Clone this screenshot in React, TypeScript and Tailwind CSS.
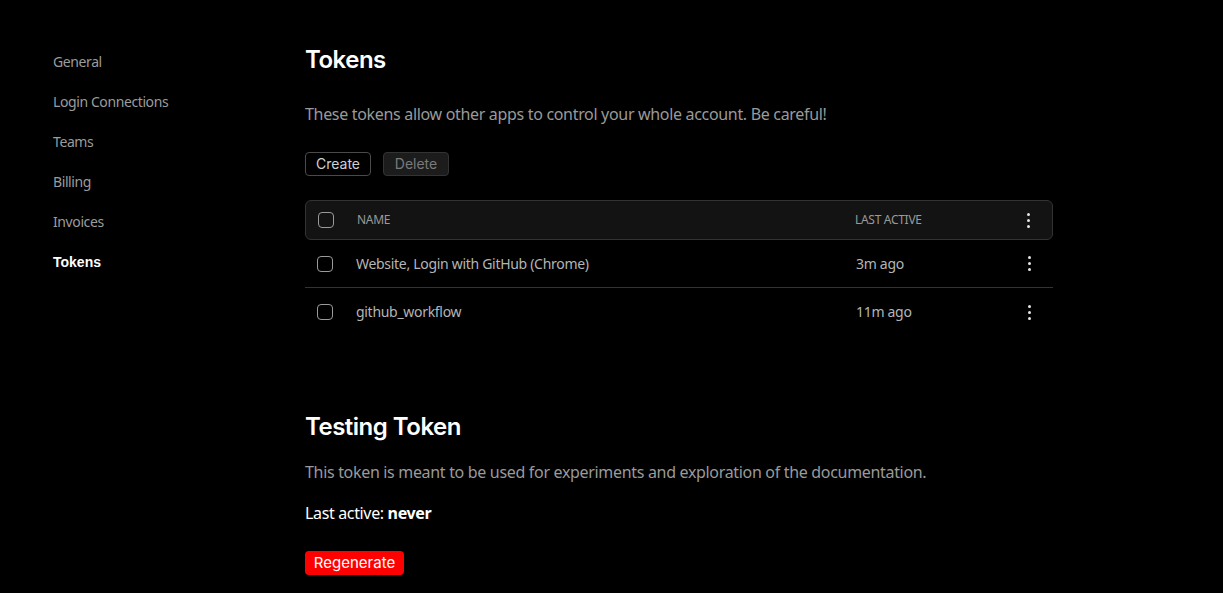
const body = { fontFamily: '"Noto Sans", "Open Sans", sans-serif' };
const ui = { fontFamily: 'Inter, Roboto, sans-serif' };

const nav = ["General", "Login Connections", "Teams", "Billing", "Invoices", "Tokens"];

const tokens = [
  { name: "Website, Login with GitHub (Chrome)", last: "3m ago" },
  { name: "github_workflow", last: "11m ago" },
];

function Box() {
  return <span className="block w-4 h-4 rounded-[4px] border border-[#9a9a9a]" />;
}

function Dots() {
  return (
    <span className="flex flex-col items-center gap-[3px]">
      <span className="w-[3px] h-[3px] rounded-full bg-[#e5e5e5]" />
      <span className="w-[3px] h-[3px] rounded-full bg-[#e5e5e5]" />
      <span className="w-[3px] h-[3px] rounded-full bg-[#e5e5e5]" />
    </span>
  );
}

export default function App() {
  return (
    <div className="min-h-screen bg-black text-white flex" style={body}>
      <aside className="w-[305px] shrink-0 pl-[53px] pt-[52px] flex flex-col">
        {nav.map((n) => (
          <div
            key={n}
            className={
              n === "Tokens"
                ? "h-10 text-sm font-bold text-white"
                : "h-10 text-sm text-[#9c9c9c] tracking-[-0.4px]"
            }
            style={n === "Tokens" ? { fontFamily: '"Liberation Sans", Arial, sans-serif' } : undefined}
          >
            {n}
          </div>
        ))}
      </aside>

      <main className="w-[748px] pt-[44px] pb-4">
        <h1 className="text-2xl font-semibold leading-8 text-white tracking-[-0.5px]" style={ui}>Tokens</h1>
        <p className="mt-[26px] text-base leading-6 text-[#9a9a9a] tracking-[-0.32px]">
          These tokens allow other apps to control your whole account. Be careful!
        </p>
        <div className="mt-[26px] flex gap-3 text-sm" style={ui}>
          <button className="h-6 w-[66px] rounded-[4px] border border-[#4a4a4a] text-[#d0d0d0]">Create</button>
          <button className="h-6 w-[66px] rounded-[4px] border border-[#333] bg-[#1c1c1c] text-[#7a7a7a]">Delete</button>
        </div>

        <div className="mt-6">
          <div className="h-10 flex items-center rounded-[6px] border border-[#333] bg-[#131313] text-xs text-[#9a9a9a] tracking-[-0.3px]">
            <div className="w-[51px] pl-3"><Box /></div>
            <div className="flex-1">NAME</div>
            <div className="w-[150px]">LAST ACTIVE</div>
            <div className="w-[47px] flex justify-center"><Dots /></div>
          </div>
          {tokens.map((t, i) => (
            <div
              key={t.name}
              className={
                "h-12 flex items-center text-sm text-[#b5b5b5] tracking-[-0.3px]" +
                (i < tokens.length - 1 ? " border-b border-[#333]" : "")
              }
            >
              <div className="w-[51px] pl-3"><Box /></div>
              <div className="flex-1">{t.name}</div>
              <div className="w-[150px]">{t.last}</div>
              <div className="w-[47px] flex justify-center"><Dots /></div>
            </div>
          ))}
        </div>

        <h2 className="mt-[75px] text-2xl font-semibold leading-8 text-white tracking-[-0.5px]" style={ui}>Testing Token</h2>
        <p className="mt-[17px] text-base leading-6 text-[#9a9a9a] tracking-[-0.32px]">
          This token is meant to be used for experiments and exploration of the documentation.
        </p>
        <p className="mt-[17px] text-base leading-6 text-white tracking-[-0.35px]">
          Last active: <span className="font-bold">never</span>
        </p>
        <button
          className="mt-[26px] h-6 w-[99px] rounded-[4px] bg-[#ff0000] text-[15px] text-white"
          style={ui}
        >
          Regenerate
        </button>
      </main>
    </div>
  );
}
